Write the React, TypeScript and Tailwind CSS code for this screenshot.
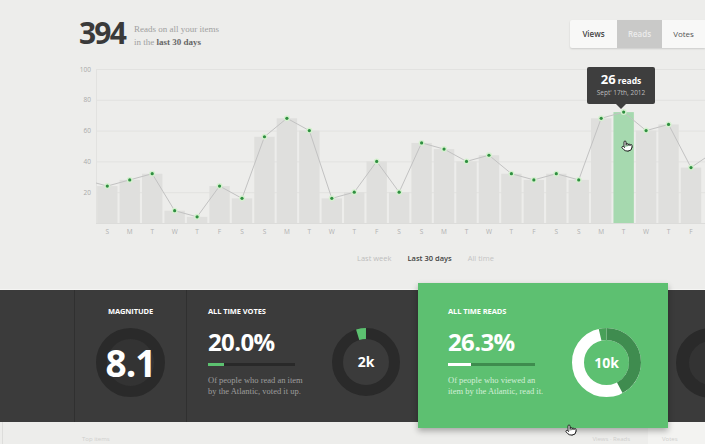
import React from 'react';
import { Pointer } from 'lucide-react';

const values = [24, 28, 32, 8, 4, 24, 16, 56, 68, 60, 16, 20, 40, 20, 52, 48, 40, 44, 32, 28, 32, 28, 68, 72, 60, 64, 36];
const dayNames = ['S', 'M', 'T', 'W', 'T', 'F', 'S'];
const ACTIVE = 23;

const cx = (i: number) => 107.3 + i * 22.45;
const cy = (v: number) => 163 - v * 1.54;

function ReadsChart() {
  const points = values.map((v, i) => `${cx(i)},${cy(v)}`);
  const line = `M96,123 L${points.join(' L')} L705,98`;
  return (
    <svg width={705} height={180} viewBox="0 0 705 180" className="block">
      {[100, 80, 60, 40, 20].map((v) => (
        <g key={v}>
          <line x1={96} x2={705} y1={cy(v) + 0.5} y2={cy(v) + 0.5} stroke="#e2e2e0" />
          <text x={91} y={cy(v) + 2.5} textAnchor="end" fontSize={6.5} fill="#a9a9a9">
            {v}
          </text>
        </g>
      ))}
      <line x1={96.5} x2={96.5} y1={9} y2={163} stroke="#e2e2e0" />
      {values.map((v, i) => (
        <rect
          key={i}
          x={cx(i) - 10.2}
          y={cy(v)}
          width={20.4}
          height={163 - cy(v)}
          fill={i === ACTIVE ? '#a6d9af' : '#dfdfdd'}
        />
      ))}
      <line x1={96} x2={705} y1={163.5} y2={163.5} stroke="#dcdcda" />
      <path d={line} fill="none" stroke="#c2c2c2" strokeWidth={1} />
      {values.map((v, i) => (
        <g key={i}>
          <circle cx={cx(i)} cy={cy(v)} r={3} fill="#d5f0cf" />
          <circle cx={cx(i)} cy={cy(v)} r={1.6} fill="#2f8f40" />
        </g>
      ))}
      {values.map((_, i) => (
        <text key={i} x={cx(i)} y={173.5} textAnchor="middle" fontSize={6.5} fill="#b0b0b0">
          {dayNames[i % 7]}
        </text>
      ))}
    </svg>
  );
}

interface ArcProps {
  r: number;
  width: number;
  from: number;
  to: number;
  color: string;
}

function Arc({ r, width, from, to, color }: ArcProps) {
  const c = 2 * Math.PI * r;
  const len = ((to - from) / 360) * c;
  return (
    <circle
      cx={0}
      cy={0}
      r={r}
      fill="none"
      stroke={color}
      strokeWidth={width}
      strokeDasharray={`${len} ${c}`}
      transform={`rotate(${from - 90})`}
    />
  );
}

function Donut({ size, children, label }: { size: number; children: React.ReactNode; label?: string }) {
  const h = size / 2;
  return (
    <div className="relative shrink-0" style={{ width: size, height: size }}>
      <svg width={size} height={size} viewBox={`${-h} ${-h} ${size} ${size}`} className="block">
        {children}
      </svg>
      {label && (
        <div className="absolute inset-0 flex items-center justify-center text-[14px] font-bold text-white leading-none">
          {label}
        </div>
      )}
    </div>
  );
}

function StatBlock({
  title,
  value,
  fill,
  barColor,
  trackColor,
  textColor,
  lines,
}: {
  title: string;
  value: string;
  fill: number;
  barColor: string;
  trackColor: string;
  textColor: string;
  lines: string[];
}) {
  return (
    <div className="w-[124px] shrink-0 flex flex-col">
      <div className="h-[10px] leading-[10px] text-[7.5px] font-bold text-white uppercase tracking-[-0.1px]">{title}</div>
      <div className="mt-[14px] text-[24px] leading-none font-bold text-white tracking-[-0.6px]">{value}</div>
      <div className="mt-[9px] h-[3px] w-[87px] flex" style={{ background: trackColor }}>
        <div className="h-full" style={{ width: fill, background: barColor }} />
      </div>
      <div
        className="mt-[9px] text-[8.5px] leading-[11px] font-['Liberation_Serif',serif]"
        style={{ color: textColor }}
      >
        {lines.map((l) => (
          <div key={l}>{l}</div>
        ))}
      </div>
    </div>
  );
}

export default function App() {
  return (
    <div className="relative w-[705px] h-[444px] overflow-hidden bg-[#ededeb] font-['Open_Sans','Liberation_Sans',sans-serif]">
      <section className="h-[290px] flex flex-col border-b border-[#f5f5f3]">
        <header className="h-[60px] flex items-start">
          <div className="ml-[79px] mt-[18px] text-[30px] leading-none font-bold text-[#3a3a3a] tracking-[-1.8px]">394</div>
          <div className="ml-[9px] mt-[23px] text-[9px] leading-[13px] text-[#a0a0a0] font-['Liberation_Serif',serif]">
            <div>Reads on all your items</div>
            <div>
              in the <span className="font-bold text-[#666]">last 30 days</span>
            </div>
          </div>
          <div className="ml-auto mt-[20px] h-[28px] flex bg-[#f8f8f7] rounded-l-[2px] shadow-[0_1px_2px_rgba(0,0,0,0.14)] text-[8px]">
            <div className="w-[47px] flex items-center justify-center font-semibold text-[#444]">Views</div>
            <div className="w-[45px] flex items-center justify-center bg-[#c9c9c8] text-[#ececec] font-semibold">Reads</div>
            <div className="w-[43px] flex items-center justify-center text-[#555]">Votes</div>
          </div>
        </header>

        <div className="relative h-[180px]">
          <ReadsChart />
          <div className="absolute left-[587px] top-[7px] w-[68px] h-[37px] bg-[#3e3e3e] rounded-[2px] flex flex-col items-center pt-[6px]">
            <div className="flex items-baseline gap-[2px] text-white font-bold leading-none">
              <span className="text-[13px]">26</span>
              <span className="text-[8.5px]">reads</span>
            </div>
            <div className="mt-[3px] text-[6.5px] leading-[8px] text-[#bdbdbd]">Sept' 17th, 2012</div>
            <div className="absolute left-1/2 -translate-x-1/2 top-full w-0 h-0 border-x-[5px] border-x-transparent border-t-[5px] border-t-[#3e3e3e]" />
          </div>
          <Pointer size={12} fill="#ffffff" stroke="#111" strokeWidth={1.8} className="absolute left-[621px] top-[80px]" />
        </div>

        <div className="mt-[9px] h-[20px] flex items-center gap-[16px] pl-[357px] text-[7.5px]">
          <span className="text-[#bdbdbd]">Last week</span>
          <span className="text-[#444] font-semibold">Last 30 days</span>
          <span className="text-[#c4c4c4]">All time</span>
        </div>
      </section>

      <section className="flex h-[132px] bg-[#3b3b3b]">
        <div className="w-[75px] shrink-0 border-r border-[#303030]" />
        <div className="w-[112px] shrink-0 border-r border-[#303030] flex flex-col items-center pt-[16px]">
          <div className="h-[10px] leading-[10px] text-[7.5px] font-bold text-white uppercase tracking-[-0.1px]">Magnitude</div>
          <div className="relative mt-[12px] w-[69px] h-[69px]">
            <Donut size={69}>
              <circle r={24} fill="#333333" />
              <circle r={29} fill="none" stroke="#2a2a2a" strokeWidth={11} />
            </Donut>
            <div className="absolute inset-0 flex items-center justify-center text-[37px] font-bold text-white leading-none tracking-[-1px]">
              8.1
            </div>
          </div>
        </div>

        <div className="w-[231px] shrink-0 flex pl-[21px] pt-[16px]">
          <StatBlock
            title="All time votes"
            value="20.0%"
            fill={16}
            barColor="#5cc170"
            trackColor="#292929"
            textColor="#9d9d9d"
            lines={['Of people who read an item', 'by the Atlantic, voted it up.']}
          />
          <div className="mt-[22px]">
            <Donut size={68} label="2k">
              <circle r={28.5} fill="none" stroke="#2a2a2a" strokeWidth={11} />
              <Arc r={28.5} width={11} from={343} to={360} color="#5cc170" />
            </Donut>
          </div>
        </div>

        <div className="relative z-10 -mt-[7px] h-[145px] w-[250px] shrink-0 bg-[#5dc071] shadow-[0_3px_6px_rgba(0,0,0,0.3)] flex pl-[30px] pt-[23px]">
          <StatBlock
            title="All time reads"
            value="26.3%"
            fill={23}
            barColor="#ffffff"
            trackColor="#3e8c4e"
            textColor="#d3efd8"
            lines={['Of people who viewed an', 'item by the Atlantic, read it.']}
          />
          <div className="mt-[22px]">
            <Donut size={69} label="10k">
              <circle r={28.5} fill="none" stroke="#ffffff" strokeWidth={12} />
              <Arc r={28.5} width={12} from={0} to={152} color="#3f8c4f" />
              <Arc r={28.5} width={12} from={347} to={360} color="#48a058" />
            </Donut>
          </div>
        </div>

        <div className="flex-1 overflow-hidden pl-[8px] pt-[38px]">
          <Donut size={70}>
            <circle r={26} fill="#333333" />
            <circle r={28.5} fill="none" stroke="#2a2a2a" strokeWidth={13} />
          </Donut>
        </div>
      </section>

      <section className="h-[22px] flex text-[6px] text-[#cfcfcd]">
        <div className="w-[3px] border-r border-[#dddddb]" />
        <div className="pl-[79px] pt-[14px] leading-none">Top items</div>
        <div className="ml-auto pt-[14px] pr-[18px] leading-none">Views · Reads</div>
        <div className="w-[57px] bg-[#f3f3f1] pt-[14px] pl-[14px] leading-none">Votes</div>
      </section>

      <Pointer size={12} fill="#ffffff" stroke="#111" strokeWidth={1.8} className="absolute left-[565px] top-[424px] z-20" />
    </div>
  );
}
